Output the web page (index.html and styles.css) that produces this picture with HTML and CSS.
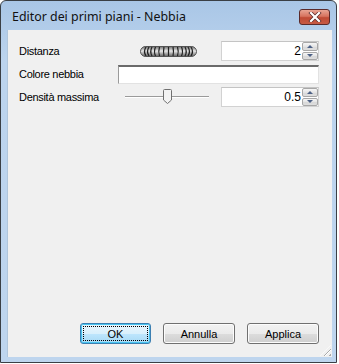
FILE: index.html
```html
<!DOCTYPE html>
<html lang="it">
<head>
    <meta charset="UTF-8">
    <title>Editor dei primi piani - Nebbia</title>
    <link rel="stylesheet" href="styles.css">
</head>
<body>
    <div class="window">
        <div class="titlebar">
            <span class="title">Editor dei primi piani - Nebbia</span>
            <span class="close-btn">
                <svg width="16" height="10" viewBox="0 0 16 10">
                    <path d="M4 1 L12 9 M12 1 L4 9" stroke="#5a2a2a" stroke-width="3.6" stroke-linecap="square"/>
                    <path d="M4 1 L12 9 M12 1 L4 9" stroke="#fff" stroke-width="2.2" stroke-linecap="square"/>
                </svg>
            </span>
        </div>
        <div class="client">
            <div class="fields">
                <div class="row">
                    <span class="label">Distanza</span>
                    <span class="jog">
                        <svg width="57" height="11" viewBox="0 0 57 11">
                            <defs>
                                <linearGradient id="jogShade" x1="0" y1="0" x2="0" y2="1">
                                    <stop offset="0" stop-color="#6e6e6e"/>
                                    <stop offset="0.45" stop-color="#e8e8e8"/>
                                    <stop offset="1" stop-color="#5e5e5e"/>
                                </linearGradient>
                            </defs>
                            <rect x="0.5" y="0.5" width="56" height="10" rx="5" fill="url(#jogShade)" stroke="#555"/>
                            <g fill="none" stroke="#202020" stroke-width="1.2">
                                <path d="M6 1 Q3 5.5 6 10"/>
                                <path d="M9 1 Q6 5.5 9 10"/>
                                <path d="M12 1 Q9.5 5.5 12 10"/>
                                <path d="M15.5 1 Q13.5 5.5 15.5 10"/>
                                <path d="M19.5 1 Q18 5.5 19.5 10"/>
                                <path d="M24 1 Q23 5.5 24 10"/>
                                <path d="M28.5 1 L28.5 10"/>
                                <path d="M33 1 Q34 5.5 33 10"/>
                                <path d="M37.5 1 Q39 5.5 37.5 10"/>
                                <path d="M41.5 1 Q43.5 5.5 41.5 10"/>
                                <path d="M45 1 Q47.5 5.5 45 10"/>
                                <path d="M48 1 Q51 5.5 48 10"/>
                                <path d="M51 1 Q54 5.5 51 10"/>
                            </g>
                        </svg>
                    </span>
                    <span class="spin">
                        <span class="spin-value">2</span>
                        <span class="spin-btns">
                            <span class="spin-btn"><i class="arrow-up"></i></span>
                            <span class="spin-btn"><i class="arrow-down"></i></span>
                        </span>
                    </span>
                </div>
                <div class="row">
                    <span class="label">Colore nebbia</span>
                    <span class="color-box"></span>
                </div>
                <div class="row">
                    <span class="label">Densità massima</span>
                    <span class="slider">
                        <span class="track"></span>
                        <svg class="thumb" width="9" height="15" viewBox="0 0 9 15">
                            <path d="M1.5 0.5 H7.5 Q8.5 0.5 8.5 1.5 V11 L4.5 14.5 L0.5 11 V1.5 Q0.5 0.5 1.5 0.5 Z" fill="#f3f3f3" stroke="#707070"/>
                        </svg>
                    </span>
                    <span class="spin">
                        <span class="spin-value">0.5</span>
                        <span class="spin-btns">
                            <span class="spin-btn"><i class="arrow-up"></i></span>
                            <span class="spin-btn"><i class="arrow-down"></i></span>
                        </span>
                    </span>
                </div>
            </div>
            <div class="buttons">
                <span class="btn btn-default"><span class="focus">OK</span></span>
                <span class="btn">Annulla</span>
                <span class="btn">Applica</span>
            </div>
            <span class="grip"></span>
        </div>
    </div>
</body>
</html>
```

FILE: styles.css
```css
body {
    margin: 0;
    background: #ffffff;
    font-family: "Liberation Sans", Arial, sans-serif;
}

.window {
    width: 337px;
    height: 363px;
    box-sizing: border-box;
    border: 1px solid #3a3f45;
    border-radius: 6px 6px 0 0;
    background: linear-gradient(#a9c6e6, #bcd4ee 60px, #bed5ee);
    display: flex;
    flex-direction: column;
    padding: 0 4px 5px 6px;
    box-shadow: 0 1px 0 #33c4d4;
}

.titlebar {
    height: 29px;
    display: flex;
    align-items: center;
    justify-content: space-between;
    padding-left: 5px;
}

.title {
    font-family: "Noto Sans", sans-serif;
    font-size: 12.4px;
    color: #111;
    margin-top: 2px;
}

.close-btn {
    width: 31px;
    height: 16px;
    margin-top: 2px;
    margin-right: 2px;
    box-sizing: border-box;
    border: 1px solid #5b2a2a;
    border-radius: 3px;
    background: linear-gradient(#e8a494, #d7735f 45%, #c04a35 55%, #c65a44);
    display: flex;
    align-items: center;
    justify-content: center;
}

.client {
    flex: 1;
    position: relative;
    background: #f0f0f0;
    border-left: 1px solid #b0c6dc;
    display: flex;
    flex-direction: column;
    justify-content: space-between;
    font-size: 11px;
    color: #000;
}

.fields {
    padding: 11px 13px 0 11px;
    display: flex;
    flex-direction: column;
    gap: 3px;
}

.row {
    display: flex;
    align-items: center;
    height: 20px;
}

.label {
    width: 99px;
    flex: none;
    letter-spacing: -0.3px;
}

.jog {
    margin-left: 22px;
    height: 11px;
    display: flex;
}

.spin {
    margin-left: auto;
    width: 98px;
    height: 20px;
    box-sizing: border-box;
    border: 1px solid #d2d2d2;
    border-top-color: #c4c4c4;
    background: #fff;
    display: flex;
    align-items: center;
}

.spin-value {
    flex: 1;
    text-align: right;
    font-size: 12px;
    padding-right: 1px;
}

.spin-btns {
    width: 16px;
    height: 18px;
    display: flex;
    flex-direction: column;
    gap: 1px;
}

.spin-btn {
    flex: 1;
    border: 1px solid #a7a7a7;
    border-radius: 2px;
    background: linear-gradient(#f6f6f6, #e4e4e4 50%, #d8d8d8 51%, #dedede);
    display: flex;
    align-items: center;
    justify-content: center;
}

.arrow-up {
    width: 0;
    height: 0;
    border-left: 3px solid transparent;
    border-right: 3px solid transparent;
    border-bottom: 3px solid #4d6185;
}

.arrow-down {
    width: 0;
    height: 0;
    border-left: 3px solid transparent;
    border-right: 3px solid transparent;
    border-top: 3px solid #4d6185;
}

.color-box {
    flex: 1;
    height: 19px;
    box-sizing: border-box;
    background: #fff;
    border: 1px solid #e2e2e2;
    border-top: 2px solid #6a6a6a;
    border-left: 1px solid #9a9a9a;
}

.slider {
    margin-left: 7px;
    width: 84px;
    height: 20px;
    position: relative;
    display: flex;
    align-items: center;
}

.track {
    width: 100%;
    height: 1px;
    background: #9a9a9a;
    border-bottom: 1px solid #ffffff;
}

.thumb {
    position: absolute;
    left: 38px;
    top: 2px;
}

.buttons {
    display: flex;
    justify-content: flex-end;
    gap: 12px;
    padding: 0 13px 13px 0;
}

.btn {
    width: 72px;
    height: 21px;
    box-sizing: border-box;
    border: 1px solid #707070;
    border-radius: 3px;
    background: linear-gradient(#f2f2f2, #ebebeb 50%, #dddddd 51%, #cfcfcf);
    display: flex;
    align-items: center;
    justify-content: center;
    box-shadow: inset 0 0 0 1px #fcfcfc;
}

.btn-default {
    width: 71px;
    border-color: #3c7fb1;
    background: linear-gradient(#eaf6fd, #d9f0fc 50%, #bee6fd 51%, #a7d9f5);
    box-shadow: inset 0 0 0 1px #48c4f0;
}

.focus {
    width: 63px;
    height: 13px;
    border: 1px dotted #000;
    display: flex;
    align-items: center;
    justify-content: center;
}

.grip {
    position: absolute;
    right: 1px;
    bottom: 1px;
    width: 11px;
    height: 11px;
    background: repeating-linear-gradient(135deg, transparent 0 2px, #a9a9a9 2px 3px, #fff 3px 4px);
    clip-path: polygon(100% 0, 100% 100%, 0 100%);
}
```
